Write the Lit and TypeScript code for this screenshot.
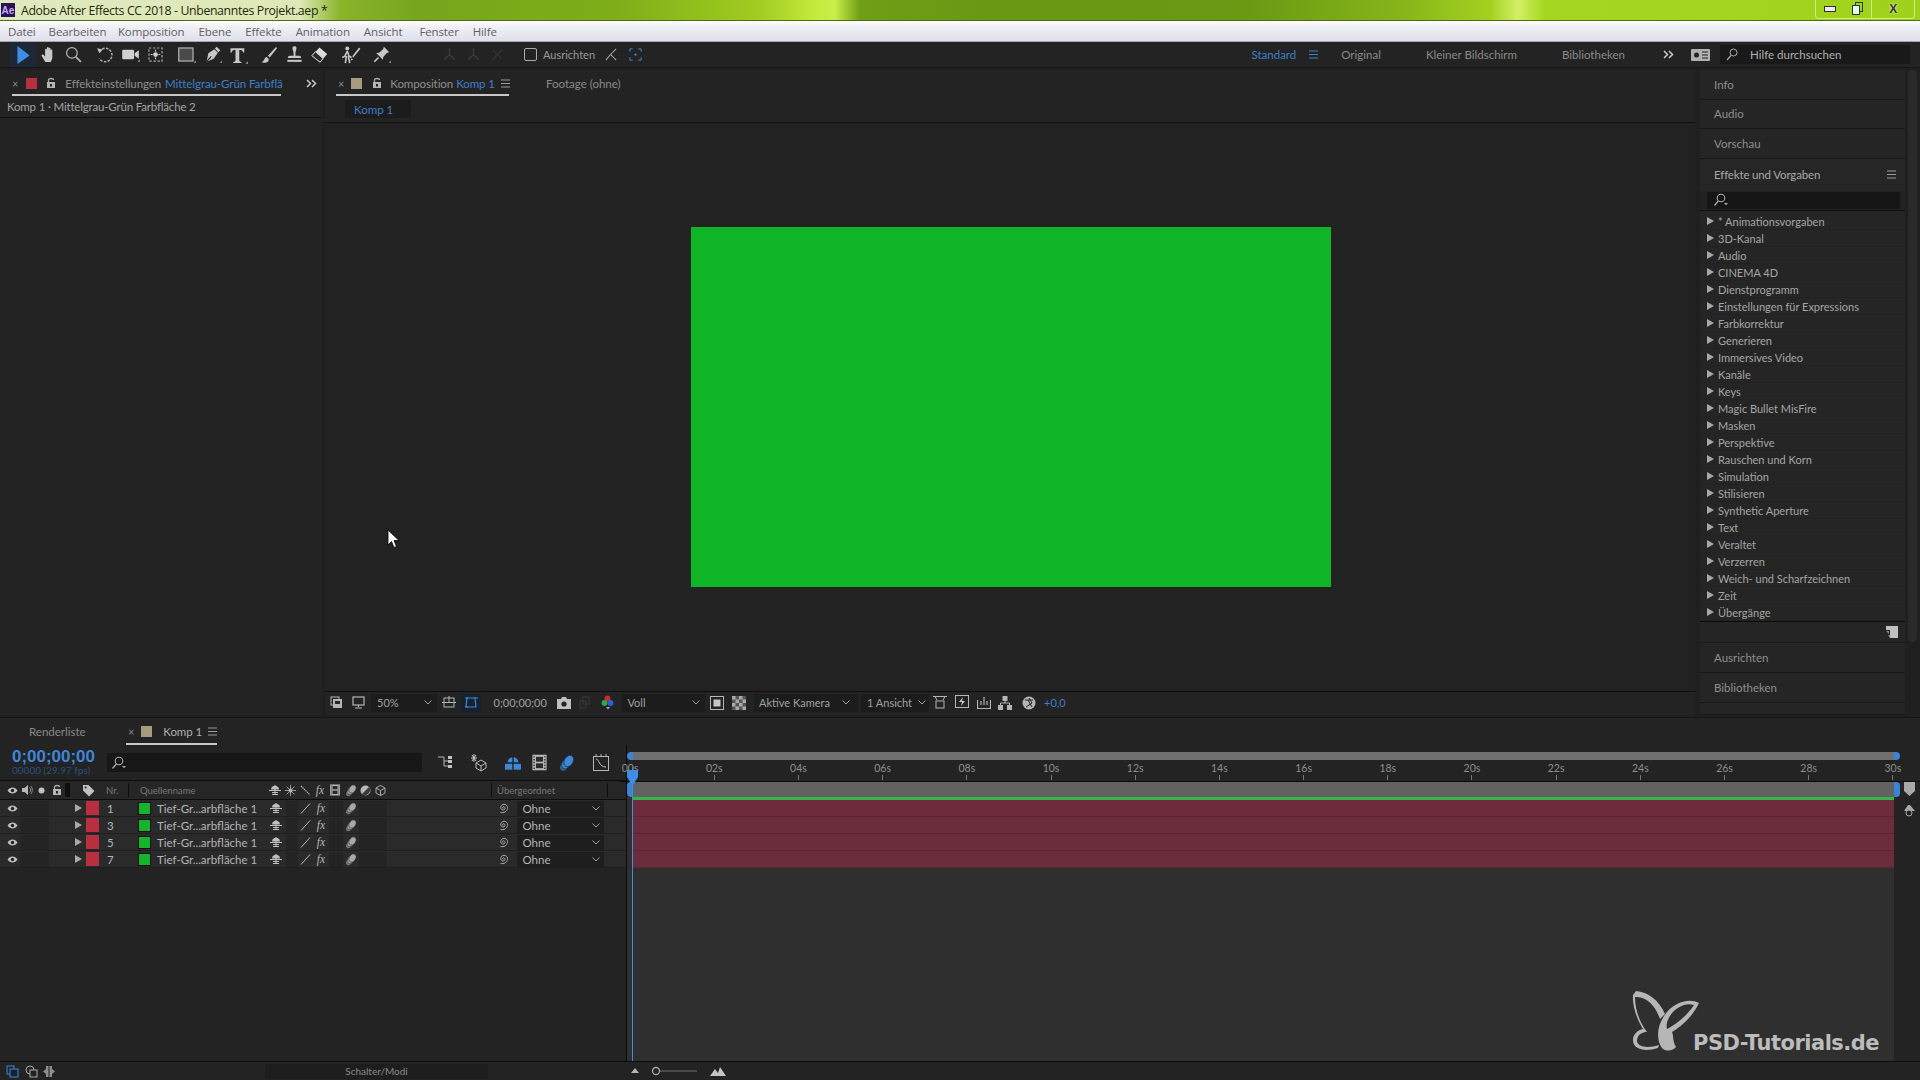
import { LitElement, html, svg, css } from "lit";
import { customElement } from "lit/decorators.js";

const ic = (w: number, body: any, cls = "") =>
  html`<svg class="ic ${cls}" width="${w}" height="${w}" viewBox="0 0 16 16">${body}</svg>`;

const I = {
  arrow: html`<svg class="ic" width="18" height="20" viewBox="0 0 16 18"><path d="M3 1 L14 9.5 L3 17 Z" fill="#3d8ee6"/></svg>`,
  hand: ic(17, svg`<path d="M5 15 L1.6 9.3 C1.1 8.1 2.6 7.4 3.5 8.4 L4.8 9.8 V3.4 C4.8 2.2 6.4 2.2 6.5 3.4 V7.5 V1.9 C6.5 .7 8.2 .7 8.2 1.9 V7.5 V2.6 C8.2 1.4 9.9 1.4 9.9 2.6 V8 V4.2 C9.9 3 11.6 3 11.6 4.2 V10.5 C11.6 12.5 10.6 13.5 10.2 15 Z" fill="#c9c9c9"/>`),
  zoom: ic(17, svg`<circle cx="6.5" cy="6.5" r="5" fill="none" stroke="#b5b5b5" stroke-width="1.2"/><path d="M10.2 10.2 L15 15" stroke="#b5b5b5" stroke-width="1.6"/>`),
  rotate: ic(18, svg`<path d="M3 5 A6 6 0 1 1 3 11" fill="none" stroke="#b0b0b0" stroke-width="1.3" stroke-dasharray="2.2 1.2"/><path d="M1 2 L6 3 L3 6.5 Z" fill="#c4c4c4"/>`),
  camera: ic(19, svg`<rect x="1" y="4" width="10" height="8" rx="1" fill="#d0d0d0"/><path d="M11.5 7 L15 4.5 V11.5 L11.5 9 Z" fill="#d0d0d0"/><path d="M14 14 h2 v-2 z" fill="#999"/>`),
  pan: ic(19, svg`<rect x="2.5" y="2.5" width="11" height="11" fill="none" stroke="#aaa" stroke-dasharray="2 1.4"/><circle cx="8" cy="8" r="2" fill="#d0d0d0"/><path d="M8 4 v1.5 M8 10.5 v1.5 M4 8 h1.5 M10.5 8 h1.5" stroke="#d0d0d0"/>`),
  rect: ic(19, svg`<rect x="1.5" y="2.5" width="12" height="11" fill="#4a4a4a" stroke="#b5b5b5" stroke-width="1"/><path d="M14 15 h2 v-2 z" fill="#999"/>`),
  pen: ic(19, svg`<path d="M3 14 L4.5 7 L9.5 3.5 L12.5 6.5 L9 11.5 Z" fill="#c8c8c8"/><path d="M3 14 L7 9.5" stroke="#1e1e1e"/><path d="M10 3 L11.5 1.5 L14.5 4.5 L13 6" fill="#c8c8c8"/><path d="M14 15 h2 v-2 z" fill="#999"/>`),
  text: ic(20, svg`<path d="M2 2.5 H13 V6 H12 C11.8 4.3 11 4 9 4 V12 C9 13.2 9.6 13.4 10.8 13.5 V14.3 H4.2 V13.5 C5.4 13.4 6 13.2 6 12 V4 C4 4 3.2 4.3 3 6 H2 Z" fill="#c8c8c8"/><path d="M14 15 h2 v-2 z" fill="#999"/>`),
  brush: ic(19, svg`<path d="M14.5 1.5 L7.5 9 L9 10.5 L15 3 Z" fill="#c8c8c8"/><path d="M6.5 10 C4 10.5 5 13.5 2 14.5 C5 15.5 9 14.5 8 11.5 Z" fill="#c8c8c8"/>`),
  stamp: ic(19, svg`<path d="M6.3 2.5 C6.3 .6 9.7 .6 9.7 2.5 C9.7 4 8.8 5 8.8 7 V9 H12 C13.2 9 13.6 10 13.6 11 H2.4 C2.4 10 2.8 9 4 9 H7.2 V7 C7.2 5 6.3 4 6.3 2.5 Z" fill="#c8c8c8"/><rect x="2" y="12.5" width="12" height="1.7" fill="#c8c8c8"/>`),
  eraser: ic(19, svg`<path d="M1.5 9 L8 2 L14.5 7.5 L8.5 14.5 Z" fill="#dcdcdc"/><path d="M1.5 9 L4.6 5.6 L11 11.4 L8.5 14.5 Z" fill="#2c2c2c" stroke="#dcdcdc" stroke-width=".8"/>`),
  roto: ic(20, svg`<circle cx="5" cy="2.8" r="1.6" fill="#c8c8c8"/><path d="M5 5 L3 9 L1 10 M5 5 L6.5 9 L8.5 10 M4.3 8.5 L3.5 14.5 M5.8 9 L7 14.5" stroke="#c8c8c8" stroke-width="1.3" fill="none"/><path d="M14.5 2 L9 9 L9.8 10 L15.5 3 Z" fill="#c8c8c8"/><path d="M8.5 10.5 L7.5 12.5 L9.7 11.5 Z" fill="#c8c8c8"/>`),
  pin: ic(19, svg`<path d="M10 1.5 L14.5 6 L12.5 6.7 L9.5 10 L9.2 12.5 L3.5 6.8 L6 6.5 L9.3 3.5 Z" fill="#c8c8c8"/><path d="M5.5 10.5 L2 14" stroke="#c8c8c8" stroke-width="1.3"/><path d="M14 15 h2 v-2 z" fill="#999"/>`),
  dim1: ic(17, svg`<path d="M8 3 V8 L3 13 M8 8 L13 13" stroke="#3b3b3b" stroke-width="1.4" fill="none"/><circle cx="8" cy="3" r="1" fill="#3b3b3b"/>`),
  dim2: ic(17, svg`<path d="M3 13 L13 3 M4 4 L12 12" stroke="#333" stroke-width="1.2" fill="none"/>`),
  snap1: ic(15, svg`<path d="M2 14 L7 8 L13 14 M7 8 L13 2" stroke="#a8a8a8" stroke-width="1.1" fill="none"/>`),
  snap2: ic(15, svg`<path d="M2 5 V2 H5 M11 2 H14 V5 M14 11 V14 H11 M5 14 H2 V11" stroke="#3d8ee6" fill="none"/><circle cx="8" cy="8" r="1.2" fill="#3d8ee6"/>`),
  burger: (c = "#9a9a9a") => html`<svg class="ic" width="9" height="9" viewBox="0 0 9 9"><path d="M0 1 H9 M0 4.5 H9 M0 8 H9" stroke="${c}" stroke-width="1"/></svg>`,
  lock: html`<svg class="ic" width="10" height="12" viewBox="0 0 10 12"><path d="M2.5 5 V3 C2.5 1 7.5 1 7.5 3" fill="none" stroke="#aaa" stroke-width="1.3"/><rect x="1" y="5" width="8" height="6" fill="#b5b5b5"/><rect x="4" y="7" width="2" height="2.5" fill="#222"/></svg>`,
  more: html`<svg class="ic" width="11" height="9" viewBox="0 0 11 9"><path d="M1 1 L4.5 4.5 L1 8 M6 1 L9.5 4.5 L6 8" fill="none" stroke="#c8c8c8" stroke-width="1.5"/></svg>`,
  search: html`<svg class="ic" width="16" height="14" viewBox="0 0 16 14"><circle cx="8" cy="5" r="3.8" fill="none" stroke="#aaa" stroke-width="1.1"/><path d="M5.3 8 L1.5 12.5" stroke="#aaa" stroke-width="1.3"/><path d="M11 10 h4 l-2 2.2 z" fill="#aaa"/></svg>`,
  eye: html`<svg class="ic" width="11" height="9" viewBox="0 0 11 9"><path d="M.5 4.5 C3 .5 8 .5 10.5 4.5 C8 8.5 3 8.5 .5 4.5 Z" fill="#c0c0c0"/><circle cx="5.5" cy="4.5" r="1.7" fill="#222"/></svg>`,
  speaker: html`<svg class="ic" width="12" height="12" viewBox="0 0 12 12"><path d="M1 4 H3.5 L7 1 V11 L3.5 8 H1 Z" fill="#b8b8b8"/><path d="M8.5 3.5 C10 5 10 7 8.5 8.5 M9.8 2 C11.8 4.5 11.8 7.5 9.8 10" stroke="#888" fill="none"/></svg>`,
  dot: html`<svg class="ic" width="7" height="7" viewBox="0 0 7 7"><circle cx="3.5" cy="3.5" r="3" fill="#c0c0c0"/></svg>`,
  tag: html`<svg class="ic" width="13" height="13" viewBox="0 0 13 13"><path d="M1 1 H6.5 L12.5 7 L7 12.5 L1 6.5 Z" fill="#c0c0c0"/><circle cx="3.6" cy="3.6" r="1" fill="#222"/></svg>`,
  shy: html`<svg class="ic" width="12" height="12" viewBox="0 0 12 12"><path d="M2 5.5 C2 .5 10 .5 10 5.5 Z" fill="#c0c0c0"/><path d="M0 6.5 H12 M6 1 V11 M3 10.5 H9 M3 8.5 H9" stroke="#c0c0c0" stroke-width="1"/></svg>`,
  shyBlue: html`<svg class="ic" width="16" height="16" viewBox="0 0 12 12"><path d="M2 5.5 C2 .5 10 .5 10 5.5 Z" fill="#3f88d8"/><rect x="0" y="6" width="12" height="5" fill="#3f88d8"/><path d="M6 1 V11" stroke="#1d1d1d"/><path d="M0 6.4 H12" stroke="#1d1d1d" stroke-width=".6"/></svg>`,
  sun: html`<svg class="ic" width="11" height="11" viewBox="0 0 11 11"><circle cx="5.5" cy="5.5" r="2" fill="#b8b8b8"/><path d="M5.5 0 V11 M0 5.5 H11 M1.6 1.6 L9.4 9.4 M1.6 9.4 L9.4 1.6" stroke="#b8b8b8" stroke-width=".8"/></svg>`,
  quality: html`<svg class="ic" width="11" height="11" viewBox="0 0 11 11"><path d="M1 1 L10 10" stroke="#b8b8b8" stroke-width="1.2" stroke-dasharray="1.4 .7"/></svg>`,
  slash: html`<svg class="ic" width="11" height="11" viewBox="0 0 11 11"><path d="M1 10.5 L10 .5" stroke="#b8b8b8" stroke-width="1"/></svg>`,
  film: (s = 12) => html`<svg class="ic" width="${s}" height="${s}" viewBox="0 0 12 12"><rect x="1" y="0.5" width="10" height="11" fill="#b8b8b8"/><rect x="3.5" y="2" width="5" height="3.4" fill="#2b2b2b"/><rect x="3.5" y="6.6" width="5" height="3.4" fill="#2b2b2b"/><path d="M2.2 1.5 V11 M9.8 1.5 V11" stroke="#2b2b2b" stroke-dasharray="1 1"/></svg>`,
  layers: (s = 13, c = "#a8a8a8", d = "#222") => html`<svg class="ic" width="${s}" height="${s}" viewBox="0 0 13 13"><ellipse cx="5" cy="9" rx="2.6" ry="3.4" transform="rotate(30 5 9)" fill="${c}" opacity=".6"/><ellipse cx="6.5" cy="7" rx="3" ry="4" transform="rotate(30 6.5 7)" fill="${c}" stroke="${d}" stroke-width=".5" opacity=".8"/><ellipse cx="8.5" cy="5" rx="3.2" ry="4.4" transform="rotate(30 8.5 5)" fill="${c}" stroke="${d}" stroke-width=".5"/></svg>`,
  half: html`<svg class="ic" width="11" height="11" viewBox="0 0 11 11"><circle cx="5.5" cy="5.5" r="5" fill="#b8b8b8"/><path d="M9 2 A5 5 0 0 1 2 9 Z" fill="#3a3a3a"/></svg>`,
  cube: (s = 11) => html`<svg class="ic" width="${s}" height="${s}" viewBox="0 0 11 11"><path d="M5.5 .5 L10 3 V8 L5.5 10.5 L1 8 V3 Z M1 3 L5.5 5.5 L10 3 M5.5 5.5 V10.5" fill="none" stroke="#b8b8b8" stroke-width=".9"/></svg>`,
  spiral: html`<svg class="ic" width="12" height="12" viewBox="0 0 12 12"><path d="M6 6.5 C5 6 5.5 4.5 6.8 4.8 C8.5 5.2 8.5 8 6 8 C3.5 8 3 4.5 5 3 C7.5 1.2 11 3 10.5 6.5 C10 9.5 7 11.2 3.5 10.5" fill="none" stroke="#a8a8a8" stroke-width="1"/></svg>`,
  chev: html`<svg class="ic" width="8" height="5" viewBox="0 0 8 5"><path d="M.5 .5 L4 4 L7.5 .5" fill="none" stroke="#a0a0a0"/></svg>`,
  tri: html`<svg class="ic" width="7" height="8" viewBox="0 0 7 8"><path d="M0 0 L7 4 L0 8 Z" fill="#a8a8a8"/></svg>`,
};

const toolGroups = [
  [I.arrow, I.hand, I.zoom],
  [I.rotate, I.camera, I.pan],
  [I.rect, I.pen, I.text],
  [I.brush, I.stamp, I.eraser],
  [I.roto],
  [I.pin],
];
const menu = ["Datei", "Bearbeiten", "Komposition", "Ebene", "Effekte", "Animation", "Ansicht", "Fenster", "Hilfe"];
const effects = ["* Animationsvorgaben", "3D-Kanal", "Audio", "CINEMA 4D", "Dienstprogramm", "Einstellungen für Expressions", "Farbkorrektur", "Generieren", "Immersives Video", "Kanäle", "Keys", "Magic Bullet MisFire", "Masken", "Perspektive", "Rauschen und Korn", "Simulation", "Stilisieren", "Synthetic Aperture", "Text", "Veraltet", "Verzerren", "Weich- und Scharfzeichnen", "Zeit", "Übergänge"];
const layers = [1, 3, 5, 7];
const ticks = ["00s", "02s", "04s", "06s", "08s", "10s", "12s", "14s", "16s", "18s", "20s", "22s", "24s", "26s", "28s", "30s"];

@customElement("app-root")
export class AppRoot extends LitElement {
  static styles = css`
    :host { display: block; width: 1920px; height: 1080px; overflow: hidden; background: #1f1f1f; position: relative;
      font-family: Lato, "Open Sans", sans-serif; font-size: 11.5px; color: #999; }
    .ic { display: block; flex: none; }
    .app { display: flex; flex-direction: column; width: 1920px; height: 1080px; }

    .title { height: 21px; box-sizing: border-box; flex: none; display: flex; align-items: center; position: relative; border-bottom: 1px solid #4d6b10;
      background: linear-gradient(90deg, #dfe9c0 0, #dfe8b8 300px, #8ab42a 340px, #76a51c 420px, #7fae1a 620px, #a2cc20 760px, #c4ea3c 815px, #c9ee4a 835px, #6f9f16 860px, #689814 1000px, #6a9a14 1250px, #86b41a 1400px, #a4d020 1490px, #d2f066 1518px, #a6d620 1545px, #a0d21c 1920px); }
    .ae { width: 14px; height: 14px; margin-left: 1px; background: #2a1352; color: #c9a8ff; font: 700 10px "Liberation Sans", sans-serif; display: flex; align-items: center; justify-content: center; }
    .title-text { margin-left: 6px; font: 12.3px "Open Sans", sans-serif; color: #1f2a08; letter-spacing: -.36px; }
    .winbtns { margin-left: auto; margin-right: 5px; width: 100px; height: 19px; margin-top: -2px; display: flex; align-items: center; border: 1px solid #cfe98d; border-top: 0; border-radius: 0 0 4px 4px; box-sizing: border-box; }
    .wb { flex: 1; height: 100%; display: flex; align-items: center; justify-content: center; color: #333; }
    .wb.x { flex: 1.5; border-left: 1px solid #cfe98d; font: 700 12px "Liberation Sans", sans-serif; color: #333; text-shadow: 0 0 2px #fff; }

    .menu { height: 21px; box-sizing: border-box; flex: none; display: flex; align-items: center; padding-left: 8px; gap: 14px; color: #5f5f66; font: 11.5px "Open Sans", sans-serif; letter-spacing: -.12px;
      background: linear-gradient(180deg, #fff 0, #f1f1f6 25%, #dfe0ec 100%); border-bottom: 1px solid #a8a8ad; }
    .menu span:nth-child(1) { margin-right: -1px; }
    .menu span:nth-child(2) { margin-right: -2.5px; }
    .menu span:nth-child(7) { margin-right: 3px; }

    .tool { height: 26px; box-sizing: border-box; flex: none; display: flex; align-items: center; background: #232323; border-bottom: 1px solid #161616; padding-left: 10px; }
    .tg { display: flex; margin-right: 5.5px; }
    .t { width: 25.5px; height: 25px; display: flex; align-items: center; justify-content: center; }
    .t.on { background: #1d2836; }
    .dis { display: flex; margin-left: 41px; gap: 7px; }
    .chk { width: 11px; height: 11px; border: 1px solid #aaa; border-radius: 2px; margin-left: 18px; flex: none; }
    .ausr { margin-left: 6px; color: #999; font-size: 11px; }
    .snap { margin-left: 9px; } .snap2 { margin-left: 9px; }
    .ws { margin-left: auto; display: flex; align-items: center; }
    .ws span { color: #8a8a8a; font-size: 11.5px; }
    .ws .act { color: #3f7fc8; margin-right: 13px; }
    .s-box { width: 190px; height: 19px; background: #191919; margin: 0 10px 0 10.5px; display: flex; align-items: center; gap: 12px; padding-left: 6px; color: #b0b0b0; box-sizing: border-box; font-size: 11.5px; }

    .work { height: 645px; flex: none; margin-top: 2px; display: flex; }
    .left { width: 322px; flex: none; background: #232323; display: flex; flex-direction: column; }
    .tabs { height: 26px; flex: none; display: flex; align-items: center; position: relative; white-space: nowrap; }
    .x { color: #8a8a8a; font-size: 11px; }
    .sw { width: 11px; height: 11px; flex: none; }
    .blue { color: #3f7fc8; }
    .under { box-shadow: inset 0 -2px 0 #c8c8c8; height: 26px; display: flex; align-items: center; white-space: nowrap; letter-spacing: -.08px; }
    .sub { height: 22px; box-sizing: border-box; flex: none; display: flex; align-items: center; padding-left: 7px; border-bottom: 1px solid #0f0f0f; color: #a5a5a5; letter-spacing: -.18px; }

    .comp { width: 1370px; flex: none; margin-left: 3px; background: #232323; display: flex; flex-direction: column; }
    .comptab { height: 22px; margin: 4px 0 0; flex: none; display: flex; border-bottom: 1px solid #0f0f0f; padding-left: 20px; box-sizing: content-box; }
    .comptab div { width: 66px; height: 18px; background: #1c1c1c; color: #3f7fc8; display: flex; align-items: center; padding-left: 9px; box-sizing: border-box; }
    .viewer { flex: 1; background: #222; display: flex; align-items: center; justify-content: center; padding-bottom: 0; border-bottom: 1px solid #0f0f0f; }
    .green { width: 640px; height: 360px; background: #0fb527; margin-left: 1px; margin-top: -1px; }
    .cfoot { height: 23px; box-sizing: border-box; padding-bottom: 2px; flex: none; display: flex; align-items: center; background: #232323; color: #a0a0a0; font-size: 11px; }
    .fbox { height: 18px; background: #1c1c1c; display: flex; align-items: center; justify-content: space-between; padding: 0 5px 0 6px; box-sizing: border-box; flex: none; }
    .fi { flex: none; display: flex; align-items: center; justify-content: center; }

    .right { margin-left: 5px; width: 205px; flex: none; display: flex; flex-direction: column; background: #222; position: relative; }
    .rh { height: 29.5px; flex: none; display: flex; align-items: center; padding-left: 14px; border-bottom: 1px solid #181818; color: #8e8e8e; box-sizing: border-box; background: #252525; font-size: 11.5px; }
    .fxhead { height: 32px; display: flex; align-items: center; justify-content: space-between; padding: 0 9px 0 14px; color: #a8a8a8; background: #262626; font-size: 11.5px; letter-spacing: -.15px; }
    .fxsearch { height: 17px; margin: 1px 5px 0 7px; background: #161616; display: flex; align-items: center; padding-left: 6px; }
    .fxlist { background: #252525; padding-top: 2px; border-top: 1px solid #0f0f0f; margin-top: 1px; border-bottom: 1px solid #0a0a0a; }
    .fxi { height: 17px; display: flex; align-items: center; gap: 4px; padding-left: 7px; color: #a5a5a5; font-size: 11px; box-shadow: inset 0 -1px 0 #222; }
    .fxfoot { height: 20px; display: flex; align-items: center; justify-content: flex-end; padding-right: 7px; background: #252525; border-bottom: 1px solid #191919; }
    .sbar { position: absolute; left: 208px; top: 0; width: 9px; height: 572px; background: #2a2a2a; border-radius: 5px; }

    .tl { flex: 1; margin-top: 2px; background: #232323; display: flex; flex-direction: column; position: relative; }
    .tltabs { height: 28px; flex: none; display: flex; align-items: center; border-top: 1px solid #161616; box-sizing: border-box; white-space: nowrap; }
    .tlmain { flex: 1; display: flex; min-height: 0; }
    .tlleft { width: 626px; flex: none; display: flex; flex-direction: column; }
    .ctrl { height: 36px; flex: none; display: flex; align-items: center; border-bottom: 1px solid #0c0c0c; box-sizing: border-box; }
    .tc { width: 107px; flex: none; padding-left: 12px; box-sizing: border-box; }
    .tc b { display: block; font: 700 17px/16px "Liberation Sans", sans-serif; color: #3f86d8; letter-spacing: -.02px; }
    .tc i { display: block; font: normal 10px/11px Lato, sans-serif; color: #2c4f7c; white-space: nowrap; }
    .tlsearch { width: 315px; height: 19px; background: #171717; display: flex; align-items: center; padding-left: 4px; box-sizing: border-box; flex: none; }
    .ctrlic { display: flex; align-items: center; margin-left: 9px; }
    .ctrlic div { display: flex; justify-content: center; }
    .hdr { height: 19px; flex: none; display: grid; align-items: center; grid-template-columns: 4px 16px 14px 15px 16px 5px 28px 30px 1px 11px 127.5px repeat(8, 15px) 103.5px 1px 5px 110px 1px; border-bottom: 1px solid #0c0c0c; box-sizing: border-box; color: #787878; font-size: 9.5px; background: #262626; }
    .c { display: flex; justify-content: center; align-items: center; }
    .sep { height: 14px; background: #0e0e0e; }
    .rows { flex: 1; }
    .row { height: 17px; display: grid; align-items: center; grid-template-columns: 4px 16px 15px 14px 15px 6px 16px 13px 5px 30px 20px 3px 108.5px 20px 12px 16px 15px 14px 16px 14px 14px 14px 92px 20px 4px 87px 18.5px; box-sizing: border-box; border-bottom: 1px solid #1f1f1f; background: #2a2a2a; color: #b5b5b5; font-size: 11.5px; }
    .cell { height: 15px; background: #242424; }
    .lab { width: 13px; height: 14px; background: #b82f3f; }
    .gr { width: 13px; height: 13px; background: #14b52b; border: 1px solid #111; box-sizing: border-box; }
    .num { padding-left: 3px; }
    .fxt { font: italic 11.5px "Liberation Serif", serif; color: #b8b8b8; }
    .ohne { height: 15px; background: #1e1e1e; display: flex; align-items: center; justify-content: space-between; padding: 0 4px 0 6px; }

    .tlright { flex: none; width: 1294px; min-width: 0; display: flex; flex-direction: column; position: relative; border-left: 1px solid #0c0c0c; box-sizing: border-box; }
    .wbar { margin: 7px 20px 0 0; height: 8px; background: #6f6f6f; border-left: 6px solid #3a83d6; border-right: 6px solid #3a83d6; border-radius: 4px; flex: none; }
    .ruler { height: 22px; width: 1347px; flex: none; display: grid; grid-template-columns: repeat(16, 84.2px); margin-left: -39px; border-bottom: 1px solid #0c0c0c; box-sizing: border-box; clip-path: inset(0 0 0 31px); }
    .rt { display: flex; flex-direction: column; align-items: center; color: #8f8f8f; font-size: 10.5px; line-height: 12px; padding-top: 2px; }
    .rt u { display: block; width: 1px; height: 5px; background: #777; margin-top: 1px; }
    .gbar { margin-right: 20px; height: 15px; background: #626262; border-left: 6px solid #3a83d6; border-right: 6px solid #3a83d6; border-radius: 4px; flex: none; box-sizing: border-box; }
    .area { flex: 1; margin-right: 26px; background: #2f2f2f; display: flex; flex-direction: column; }
    .gline { height: 3px; flex: none; background: #38b548; margin-left: 6px; }
    .track { height: 17px; flex: none; margin-left: 6px; background: #6c2c3b; border-bottom: 1px solid #5a2632; box-sizing: border-box; }
    .phline { position: absolute; left: 5px; top: 22px; bottom: 0; width: 1px; background: #3f8ee6; }
    .phhead { position: absolute; left: 0; top: 25px; }
    .side { position: absolute; right: 4px; top: 37px; display: flex; flex-direction: column; gap: 8px; align-items: center; }

    .bot { height: 19px; flex: none; border-top: 1px solid #0c0c0c; display: flex; align-items: center; box-sizing: border-box; background: #232323; }
    .schalter { width: 223px; height: 15px; background: #1e1e1e; text-align: center; color: #8a8a8a; font-size: 10px; line-height: 15px; margin-left: 210px; flex: none; }

    .mark { position: absolute; left: 1632px; top: 990px; display: flex; align-items: flex-end; pointer-events: none; }
    .mark span { font: 700 21px "DejaVu Sans", sans-serif; color: #bcbcbc; margin-left: -7px; margin-bottom: 0; letter-spacing: -.5px; line-height: 21px; }
    .cursor { position: absolute; left: 387px; top: 529px; }
  `;

  renderTitle() {
    return html`<div class="title"><div class="ae">Ae</div><div class="title-text">Adobe After Effects CC 2018 - Unbenanntes Projekt.aep *</div>
      <div class="winbtns"><div class="wb"><svg class="ic" width="12" height="6" viewBox="0 0 12 6"><rect x=".5" y=".5" width="11" height="5" fill="#eee" stroke="#333"/></svg></div>
      <div class="wb"><svg class="ic" width="13" height="13" viewBox="0 0 13 13"><rect x="4.5" y=".5" width="7" height="9" fill="none" stroke="#333"/><rect x="1.5" y="3.5" width="7" height="9" fill="#dfe" stroke="#333"/></svg></div><div class="wb x">X</div></div></div>`;
  }

  renderTool() {
    return html`<div class="tool">
      ${toolGroups.map((g, gi) => html`<div class="tg">${g.map((t, i) => html`<div class="t ${gi === 0 && i === 0 ? "on" : ""}">${t}</div>`)}</div>`)}
      <div class="dis">${I.dim1}${I.dim1}${I.dim2}</div>
      <div class="chk"></div><div class="ausr">Ausrichten</div>
      <div class="snap">${I.snap1}</div><div class="snap2">${I.snap2}</div>
      <div class="ws">
        <span class="act">Standard</span>${I.burger("#3f7fc8")}
        <span style="margin-left:23px">Original</span>
        <span style="margin-left:45px">Kleiner Bildschirm</span>
        <span style="margin-left:45px">Bibliotheken</span>
        <span style="margin-left:38px;display:flex">${I.more}</span>
        <svg class="ic" style="margin-left:16.5px" width="19" height="12" viewBox="0 0 19 12"><rect width="19" height="12" rx="1" fill="#b0b0b0"/><circle cx="5.5" cy="6" r="2.5" fill="#222"/><path d="M11 3 h6 M11 6 h6 M11 9 h6" stroke="#222"/></svg>
        <div class="s-box"><svg class="ic" width="12" height="13" viewBox="0 0 12 13"><circle cx="7.5" cy="4.5" r="3.5" fill="none" stroke="#aaa"/><path d="M5 7.5 L1 12" stroke="#aaa" stroke-width="1.2"/></svg>Hilfe durchsuchen</div>
      </div>
    </div>`;
  }

  renderFooter() {
    const fi = (w: number, body: any) => html`<div class="fi" style="width:${w}px">${body}</div>`;
    return html`<div class="cfoot">
      ${fi(22, html`<svg class="ic" width="13" height="13" viewBox="0 0 13 13"><rect x="1" y="1" width="8" height="8" fill="none" stroke="#b5b5b5"/><rect x="3" y="3" width="9" height="9" fill="#b5b5b5"/><rect x="5" y="5" width="5" height="3" fill="#222"/></svg>`)}
      ${fi(22, html`<svg class="ic" width="13" height="13" viewBox="0 0 13 13"><rect x="1" y="1" width="11" height="8" fill="none" stroke="#b5b5b5" stroke-width="1.2"/><path d="M6.5 9 V11 M3 12 H10" stroke="#b5b5b5" stroke-width="1.2"/></svg>`)}
      <div class="fbox" style="width:66px;margin-left:2px">50%${I.chev}</div>
      ${fi(24, html`<svg class="ic" width="14" height="14" viewBox="0 0 14 14"><rect x="2" y="2" width="10" height="9" fill="none" stroke="#b5b5b5"/><path d="M7 0 V6 M0 6.5 H14" stroke="#b5b5b5"/></svg>`)}
      <div class="fbox" style="width:20px;padding:0;justify-content:center;background:#16222f"><svg class="ic" width="15" height="15" viewBox="0 0 15 15"><path d="M3 3 H11 L12 12 H2 Z" fill="none" stroke="#3f86d8" stroke-width="1.2"/><path d="M1 3 H4 M10 3 H14 M1 12 H4" stroke="#3f86d8"/></svg></div>
      <div style="margin-left:12.5px;width:60px">0;00;00;00</div>
      ${fi(20, html`<svg class="ic" width="14" height="12" viewBox="0 0 14 12"><path d="M0 2 H4 L5 0 H9 L10 2 H14 V12 H0 Z" fill="#c0c0c0"/><circle cx="7" cy="7" r="2.6" fill="#222"/></svg>`)}
      ${fi(22, html`<svg class="ic" width="13" height="13" viewBox="0 0 13 13"><rect x="5" y="1" width="6" height="7" fill="none" stroke="#383838"/><rect x="2" y="5" width="6" height="7" fill="none" stroke="#383838"/></svg>`)}
      ${fi(24, html`<svg class="ic" width="13" height="15" viewBox="0 0 13 15"><circle cx="6.5" cy="3.5" r="3" fill="#c92c2c"/><circle cx="3.5" cy="8" r="3" fill="#2fa84a"/><circle cx="9.5" cy="8" r="3" fill="#2f5fd0"/><path d="M5 12 h4 l-2 2.5 z" fill="#aaa"/></svg>`)}
      <div class="fbox" style="width:83px;margin-left:2px">Voll${I.chev}</div>
      ${fi(24, html`<svg class="ic" width="14" height="14" viewBox="0 0 14 14"><rect x=".5" y=".5" width="13" height="13" fill="none" stroke="#b5b5b5"/><rect x="3.5" y="3.5" width="7" height="7" fill="#c5c5c5"/></svg>`)}
      ${fi(20, html`<svg class="ic" width="14" height="14" viewBox="0 0 14 14"><rect width="14" height="14" fill="#555"/><path d="M0 0 h3.5 v3.5 h-3.5 z M7 0 h3.5 v3.5 h-3.5 z M3.5 3.5 h3.5 v3.5 h-3.5 z M10.5 3.5 h3.5 v3.5 h-3.5 z M0 7 h3.5 v3.5 h-3.5 z M7 7 h3.5 v3.5 h-3.5 z M3.5 10.5 h3.5 v3.5 h-3.5 z M10.5 10.5 h3.5 v3.5 h-3.5 z" fill="#aaa"/></svg>`)}
      <div class="fbox" style="width:104px;margin-left:5.5px;padding-left:5px;padding-right:8px">Aktive Kamera${I.chev}</div>
      <div class="fbox" style="width:68px;margin-left:3px;padding-right:3px">1 Ansicht${I.chev}</div>
      ${fi(22, html`<svg class="ic" width="14" height="13" viewBox="0 0 14 13"><path d="M0 .5 H14 M2 .5 L4 4 M12 .5 L10 4" stroke="#b5b5b5"/><rect x="3" y="5" width="8" height="7" fill="none" stroke="#b5b5b5"/></svg>`)}
      ${fi(22, html`<svg class="ic" width="14" height="15" viewBox="0 0 14 15"><rect x=".5" y=".5" width="13" height="12" fill="none" stroke="#b5b5b5"/><path d="M8 2 L4 7 H7 L6 11 L10 6 H7 Z" fill="#c8c8c8"/></svg>`)}
      ${fi(22, html`<svg class="ic" width="14" height="13" viewBox="0 0 14 13"><path d="M.5 4 V12.5 H13.5 V4 M4 9 V5 M7 9 V1 M10 9 V5" fill="none" stroke="#b5b5b5" stroke-width="1.2"/></svg>`)}
      ${fi(20, html`<svg class="ic" width="14" height="14" viewBox="0 0 14 14"><rect x="4.5" y="0" width="5" height="5" fill="#b5b5b5"/><rect x="0" y="9" width="5" height="5" fill="#b5b5b5"/><rect x="9" y="9" width="5" height="5" fill="#b5b5b5"/><path d="M7 5 V7 M2.5 9 V7 H11.5 V9" stroke="#b5b5b5" fill="none"/></svg>`)}
      ${fi(28, html`<svg class="ic" width="14" height="14" viewBox="0 0 14 14"><circle cx="7" cy="7" r="6.5" fill="#b5b5b5"/><path d="M7 2 L10 7 L4 11 M3 4 L11 4 M10 11 L6 4" stroke="#232323" fill="none"/></svg>`)}
      <div class="blue" style="margin-left:1px">+0,0</div>
    </div>`;
  }

  renderRight() {
    return html`<div class="right">
      <div class="rh">Info</div><div class="rh">Audio</div><div class="rh">Vorschau</div>
      <div class="fxhead">Effekte und Vorgaben ${I.burger()}</div>
      <div class="fxsearch">${I.search}</div>
      <div class="fxlist">${effects.map((e) => html`<div class="fxi">${I.tri}<span>${e}</span></div>`)}</div>
      <div class="fxfoot"><svg class="ic" width="12" height="12" viewBox="0 0 12 12"><path d="M0 0 H12 V12 H4 V4 H0 Z" fill="#c0c0c0"/><path d="M0 5 H3 V8 Z M4 12 L2 9 H4 Z" fill="#888"/></svg></div>
      <div class="rh" style="height:30px">Ausrichten</div>
      <div class="rh" style="height:30px">Bibliotheken</div>
      <div class="rh" style="flex:1;align-items:flex-start;padding-top:9px;overflow:hidden">Zeichen</div>
      <div class="sbar"></div>
    </div>`;
  }

  renderTimeline() {
    return html`<div class="tl">
      <div class="tltabs">
        <div style="margin-left:29px;width:97px;color:#8a8a8a">Renderliste</div>
        <div class="under" style="width:91px;height:27px">
          <span class="x" style="margin:0 7px 0 2px">×</span><div class="sw" style="background:#a89a7f"></div>
          <span style="margin:0 6px 0 11px;color:#b0b0b0">Komp 1</span>${I.burger()}
        </div>
      </div>
      <div class="tlmain">
        <div class="tlleft">
          <div class="ctrl">
            <div class="tc"><b>0;00;00;00</b><i>00000 (29.97 fps)</i></div>
            <div class="tlsearch">${I.search}</div>
            <div class="ctrlic">
              <div style="width:32px"><svg class="ic" width="18" height="17" viewBox="0 0 18 17"><path d="M0 3 H6 M6 3 V12 H10 M6 7 H10" stroke="#b5b5b5" fill="none"/><rect x="10" y="2" width="4" height="3" fill="#c5c5c5"/><rect x="10" y="6" width="4" height="3" fill="#c5c5c5"/><rect x="10" y="11" width="4" height="3" fill="#c5c5c5"/></svg></div>
              <div style="width:33px"><svg class="ic" width="17" height="18" viewBox="0 0 17 18"><path d="M3 0 V8 M0 4 H6 M1 1 L5 7 M5 1 L1 7" stroke="#c8c8c8"/><path d="M10 6 L15 9 V14 L10 17 L5 14 V9 Z M5 9 L10 12 L15 9 M10 12 V17" fill="#1f1f1f" stroke="#bbb"/></svg></div>
              <div style="width:34px">${I.shyBlue}</div>
              <div style="width:19px">${I.film(17)}</div>
              <div style="width:33px">${I.layers(18, "#3f88d8", "#172c42")}</div>
              <div style="width:37px"><svg class="ic" width="16" height="17" viewBox="0 0 16 17"><rect x=".5" y="2.5" width="15" height="14" fill="none" stroke="#b5b5b5"/><path d="M3 5 C6 5 6 13 13 13" fill="none" stroke="#c8c8c8"/><path d="M3 0 V3 M8 0 V3 M13 0 V3" stroke="#b5b5b5"/></svg></div>
            </div>
          </div>
          <div class="hdr">
            <span></span><div class="c">${I.eye}</div><div class="c">${I.speaker}</div><div class="c">${I.dot}</div><div class="c">${I.lock}</div>
            <span class="sep"></span><div class="c" style="padding-left:8px">${I.tag}</div>
            <span style="padding-left:8px">Nr.</span><span class="sep"></span><span></span>
            <span>Quellenname</span>
            <div class="c">${I.shy}</div><div class="c">${I.sun}</div><div class="c">${I.quality}</div><div class="c fxt">fx</div><div class="c">${I.film()}</div><div class="c">${I.layers(13)}</div><div class="c">${I.half}</div><div class="c">${I.cube()}</div>
            <span></span><span class="sep"></span><span></span><span>Übergeordnet</span><span class="sep"></span>
          </div>
          <div class="rows">
            ${layers.map((n) => html`<div class="row">
              <span></span><div class="c">${I.eye}</div><span class="cell"></span><span class="cell"></span><span></span><span></span>
              <div class="c">${I.tri}</div><div class="lab"></div><span></span><span class="num">${n}</span>
              <div class="c"><div class="gr"></div></div><span></span><span>Tief-Gr...arbfläche 1</span>
              <div class="c">${I.shy}</div><span class="cell"></span><div class="c">${I.slash}</div><div class="c fxt">fx</div><span class="cell"></span>
              <div class="c">${I.layers(13)}</div><span class="cell"></span><span class="cell"></span><span></span><span></span>
              <div class="c">${I.spiral}</div><span></span><div class="ohne">Ohne ${I.chev}</div><span></span>
            </div>`)}
          </div>
        </div>
        <div class="tlright">
          <div class="wbar"></div>
          <div class="ruler">${ticks.map((t) => html`<div class="rt">${t}<u></u></div>`)}</div>
          <div class="gbar"></div>
          <div class="area">
            <div class="gline"></div>
            ${layers.map(() => html`<div class="track"></div>`)}
          </div>
          <div class="phline"></div>
          <svg class="phhead" width="12" height="16" viewBox="0 0 12 16"><path d="M0 0 H11 V7 L5.5 16 L0 7 Z" fill="#3f8ee6"/></svg>
          <div class="side">
            <svg class="ic" width="11" height="14" viewBox="0 0 11 14"><path d="M0 0 H11 V9 L5.5 14 L0 9 Z" fill="#a8a8a8"/></svg>
            <svg class="ic" width="13" height="13" viewBox="0 0 13 13"><path d="M1 7 L5 1 H7 L12 7 H1 Z" fill="#a8a8a8"/><circle cx="6" cy="9" r="3" fill="#232323" stroke="#a8a8a8"/></svg>
          </div>
        </div>
      </div>
      <div class="bot">
        <svg class="ic" style="margin-left:6px" width="13" height="13" viewBox="0 0 13 13"><rect x="1" y="1" width="7" height="8" fill="none" stroke="#3f88d8"/><rect x="4" y="4" width="8" height="8" fill="#16222f" stroke="#3f88d8"/></svg>
        <svg class="ic" style="margin-left:6px" width="13" height="13" viewBox="0 0 13 13"><circle cx="5" cy="5" r="4" fill="none" stroke="#aaa"/><rect x="5" y="5" width="7" height="7" fill="#222" stroke="#aaa"/></svg>
        <svg class="ic" style="margin-left:5px" width="12" height="13" viewBox="0 0 12 13"><path d="M0 6.5 L3 4 V1 H9 V4 L12 6.5 L9 9 V12 H3 V9 Z" fill="#8e8e8e"/><path d="M6 1 V12" stroke="#222"/></svg>
        <div class="schalter">Schalter/Modi</div>
        <svg class="ic" style="margin-left:142px" width="10" height="8" viewBox="0 0 10 8"><path d="M1 6 L5 1 L9 6 Z" fill="#b5b5b5"/></svg>
        <svg class="ic" style="margin-left:11px" width="50" height="12" viewBox="0 0 50 12"><path d="M9 6 H46" stroke="#4a4a4a" stroke-width="2"/><circle cx="5" cy="6" r="3.5" fill="#222" stroke="#a8a8a8" stroke-width="1.3"/></svg>
        <svg class="ic" style="margin-left:9px" width="16" height="9" viewBox="0 0 16 9"><path d="M0 9 L5 2 L8 6 L10 0 L16 9 Z" fill="#c5c5c5"/></svg>
      </div>
    </div>`;
  }

  render() {
    return html`<div class="app">
      ${this.renderTitle()}
      <div class="menu">${menu.map((m) => html`<span>${m}</span>`)}</div>
      ${this.renderTool()}
      <div class="work">
        <div class="left">
          <div class="tabs" style="padding-left:12px">
            <div class="under" style="width:269px">
              <span class="x" style="margin-right:8px">×</span><div class="sw" style="background:#b82f3f"></div>
              <span style="margin:0 9px 0 9px">${I.lock}</span><span style="color:#8f8f8f">Effekteinstellungen</span>
              <span class="blue" style="margin-left:4px">Mittelgrau-Grün Farbflä</span>
            </div>
            <span style="margin-left:25px">${I.more}</span>
          </div>
          <div class="sub">Komp 1 · Mittelgrau-Grün Farbfläche 2</div>
        </div>
        <div class="comp">
          <div class="tabs" style="padding-left:11px">
            <div class="under" style="width:173px">
              <span class="x" style="margin-right:7px;margin-left:2px">×</span><div class="sw" style="background:#a89a7f"></div>
              <span style="margin:0 8px 0 10px">${I.lock}</span><span style="color:#8f8f8f">Komposition</span>
              <span class="blue" style="margin:0 6px 0 3px">Komp 1</span>${I.burger()}
            </div>
            <span style="margin-left:37px;color:#8a8a8a">Footage (ohne)</span>
          </div>
          <div class="comptab"><div>Komp 1</div></div>
          <div class="viewer"><div class="green"></div></div>
          ${this.renderFooter()}
        </div>
        ${this.renderRight()}
      </div>
      ${this.renderTimeline()}
    </div>
    <div class="mark">
      <svg class="ic" width="68" height="64" viewBox="0 0 68 64">
        <path d="M4 1 C16 2 27 10 33 24 L28 29 C24 17 15 6 3 7 C3 20 8 33 15 42 C11 42 5 44 5 51 C6 58 18 58 27 55 L26 58 C14 62 1 60 1 50 C1 44 6 40 11 39 C5 30 0 15 1 5 Z" fill="#b6b6b6"/>
        <path d="M67 13 C58 8 42 11 32 26 C25 36 24 50 30 58 C34 62 41 61 44 57 C40 50 42 46 40 42 C47 38 60 28 67 13 Z M62 15 C54 27 44 34 35 39 C33 31 40 19 52 15 C55 14 59 14 62 15 Z" fill="#b6b6b6" fill-rule="evenodd"/>
      </svg>
      <span>PSD-Tutorials.de</span>
    </div>
    <svg class="cursor" width="14" height="20" viewBox="0 0 14 20"><path d="M1 1 V16 L4.5 12.5 L7 18.5 L9.5 17.5 L7 11.5 H12 Z" fill="#fff" stroke="#000" stroke-width=".8"/></svg>`;
  }
}
